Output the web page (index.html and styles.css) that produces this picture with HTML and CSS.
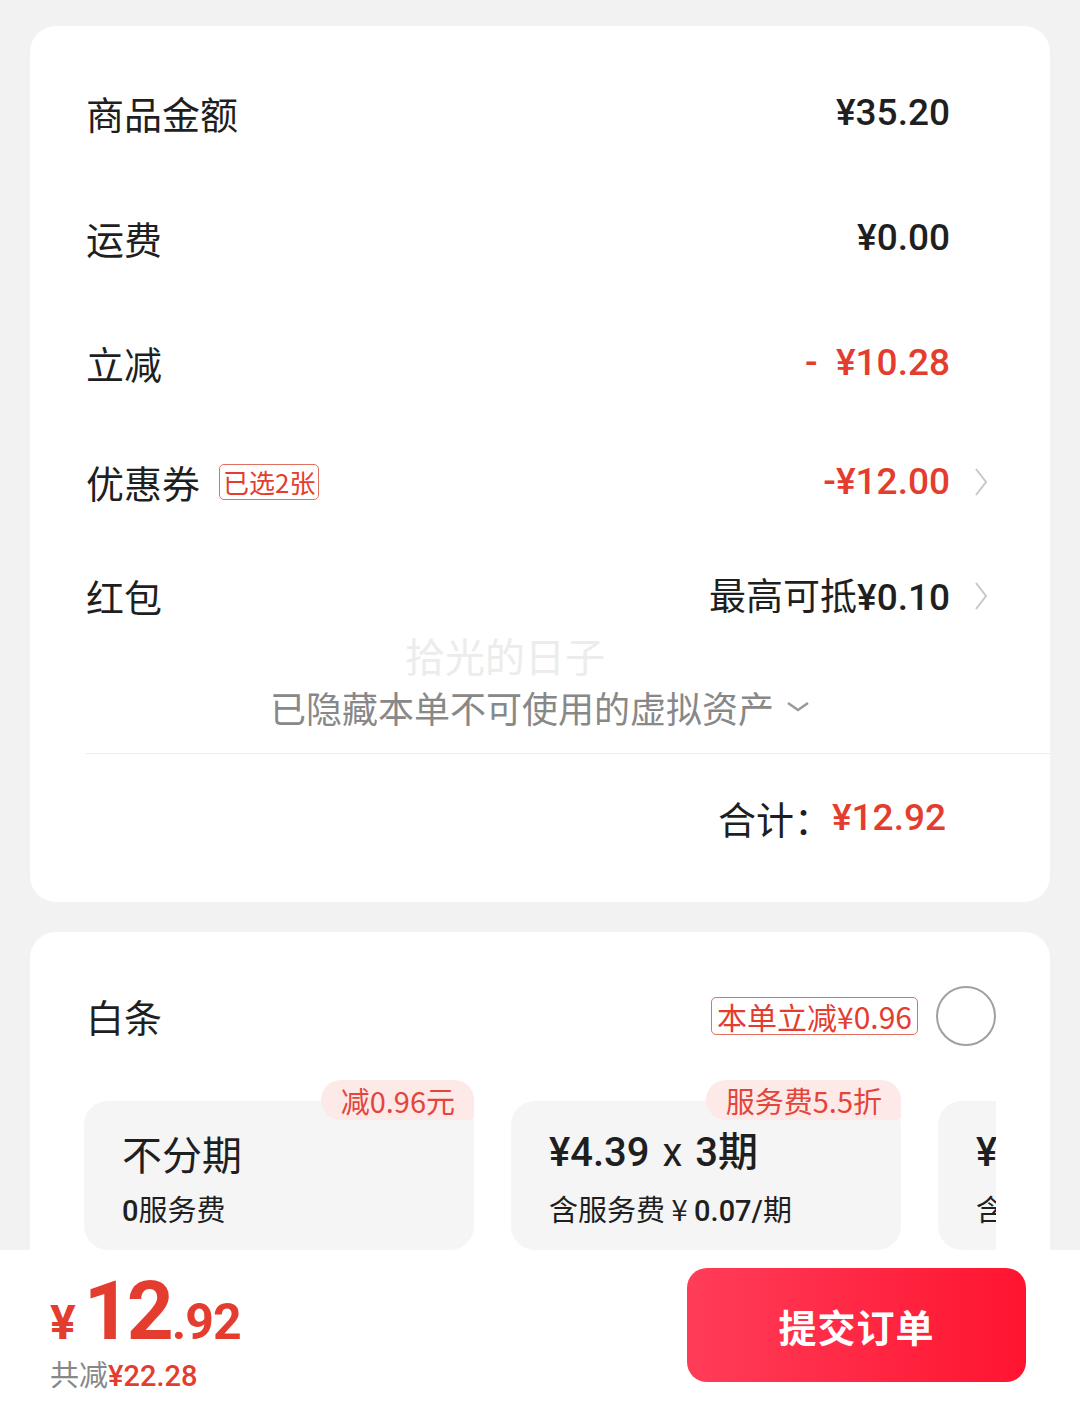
FILE: index.html
```html
<!DOCTYPE html>
<html lang="zh-CN">
<head>
    <meta charset="UTF-8">
    <meta name="viewport" content="width=device-width, initial-scale=1.0">
    <title>确认订单</title>
    <link rel="stylesheet" href="styles.css">
</head>
<body>
    <section class="card summary">
        <div class="row row-plain">
            <span class="label">商品金额</span>
            <span class="value num">¥35.20</span>
            <span class="arrow"></span>
        </div>
        <div class="row row-plain">
            <span class="label">运费</span>
            <span class="value num">¥0.00</span>
            <span class="arrow"></span>
        </div>
        <div class="row row-plain">
            <span class="label">立减</span>
            <span class="value num red">-&nbsp;&nbsp;¥10.28</span>
            <span class="arrow"></span>
        </div>
        <div class="row row-link">
            <span class="label">优惠券</span>
            <span class="tag tag-small">已选2张</span>
            <span class="value num red">-¥12.00</span>
            <span class="arrow">
                <svg width="14" height="30" viewBox="0 0 14 30"><polyline points="2,2 12,15 2,28" fill="none" stroke="#c8c8c8" stroke-width="2"/></svg>
            </span>
        </div>
        <div class="row row-link">
            <span class="label">红包</span>
            <span class="value">最高可抵<span class="num">¥0.10</span></span>
            <span class="arrow">
                <svg width="14" height="30" viewBox="0 0 14 30"><polyline points="2,2 12,15 2,28" fill="none" stroke="#c8c8c8" stroke-width="2"/></svg>
            </span>
        </div>
        <div class="hidden-assets">
            <span class="watermark">拾光的日子</span>
            <span>已隐藏本单不可使用的虚拟资产</span>
            <svg width="24" height="14" viewBox="0 0 24 14"><polyline points="2,3 12,10 22,3" fill="none" stroke="#999" stroke-width="2.5"/></svg>
        </div>
        <div class="total">
            <span class="total-label">合计：</span>
            <span class="num red">¥12.92</span>
        </div>
    </section>

    <section class="card pay">
        <div class="pay-head">
            <span class="label">白条</span>
            <span class="tag">本单立减¥0.96</span>
            <span class="radio"></span>
        </div>
        <div class="plans">
            <div class="plan">
                <span class="badge">减0.96元</span>
                <div class="plan-title">不分期</div>
                <div class="plan-sub"><span class="num">0</span>服务费</div>
            </div>
            <div class="plan">
                <span class="badge">服务费5.5折</span>
                <div class="plan-title num">¥4.39 <span class="times">x</span> 3期</div>
                <div class="plan-sub">含服务费 ¥ <span class="num">0.07/</span>期</div>
            </div>
            <div class="plan">
                <div class="plan-title num">¥1.48 <span class="times">x</span> 6期</div>
                <div class="plan-sub">含服务费 ¥ <span class="num">0.06/</span>期</div>
            </div>
        </div>
    </section>

    <footer class="bottom-bar">
        <div class="price">
            <div class="price-main">
                <span class="yen">¥</span><span class="int">12</span><span class="dec">.92</span>
            </div>
            <div class="saved">共减<span class="num red">¥22.28</span></div>
        </div>
        <button class="submit">提交订单</button>
    </footer>
</body>
</html>
```

FILE: styles.css
```css
body {
    margin: 0;
    padding: 26px 30px 0;
    background-color: #f2f2f2;
    font-family: "Noto Sans CJK SC", sans-serif;
    color: #1f1f1f;
    height: 1392px;
    overflow: hidden;
    box-sizing: border-box;
}

.num {
    font-family: Roboto, "Noto Sans CJK SC", sans-serif;
    font-weight: 500;
}

.red {
    color: #e43d2f;
}

.card {
    background-color: #fff;
    border-radius: 26px;
}

.summary {
    padding: 24px 0 22px 56px;
    position: relative;
}

.row {
    display: flex;
    align-items: center;
    padding-right: 62px;
}

.row-plain {
    height: 125px;
}

.row-link {
    height: 114px;
}

.label {
    font-size: 38px;
    line-height: 44px;
}

.value {
    margin-left: auto;
    font-size: 37px;
    line-height: 44px;
}

.arrow {
    width: 38px;
    display: flex;
    justify-content: flex-end;
}

.tag {
    font-size: 30px;
    line-height: 36px;
    color: #e43d2f;
    border: 1px solid #e27060;
    border-radius: 5px;
    padding: 0 5px;
}

.tag-small {
    font-size: 26px;
    line-height: 34px;
    margin-left: 19px;
    padding: 0 3px;
}

.hidden-assets {
    position: relative;
    display: flex;
    justify-content: center;
    align-items: center;
    gap: 12px;
    padding: 34px 56px 26px 0;
    font-size: 36px;
    line-height: 40px;
    color: #888;
    border-bottom: 1px solid #ececec;
}

.watermark {
    position: absolute;
    top: -18px;
    left: 319px;
    font-size: 40px;
    color: #ececec;
}

.total {
    height: 126px;
    display: flex;
    justify-content: flex-end;
    align-items: center;
    padding-right: 104px;
    font-size: 38px;
}

.total .num {
    font-size: 37px;
}

.pay {
    margin-top: 30px;
    padding: 54px 54px 40px 54px;
}

.pay-head {
    display: flex;
    align-items: center;
    height: 60px;
    padding-left: 2px;
}

.pay-head .tag {
    margin-left: auto;
    margin-right: 18px;
}

.radio {
    width: 56px;
    height: 56px;
    border: 2px solid #a0a0a0;
    border-radius: 50%;
}

.plans {
    display: flex;
    gap: 37px;
    margin-top: 31px;
    overflow: hidden;
    width: 912px;
}

.plan {
    position: relative;
    flex: 0 0 390px;
    height: 149px;
    margin-top: 24px;
    background-color: #f5f5f5;
    border-radius: 24px;
    padding: 26px 0 0 38px;
    box-sizing: border-box;
}

.badge {
    position: absolute;
    top: -21px;
    right: 0;
    background-color: #fde9e8;
    color: #e2463b;
    font-size: 29px;
    line-height: 40px;
    padding: 0 19px 0 20px;
    border-radius: 20px 20px 4px 20px;
}

.plan-title {
    font-size: 40px;
    line-height: 52px;
    word-spacing: 3px;
}

.times {
    font-weight: 400;
}

.plan-sub {
    font-size: 29px;
    line-height: 40px;
    margin-top: 9px;
}

.bottom-bar {
    position: fixed;
    left: 0;
    right: 0;
    bottom: 0;
    height: 168px;
    background-color: #fff;
    display: flex;
    align-items: flex-start;
    justify-content: space-between;
    padding: 18px 54px 0 50px;
    box-sizing: border-box;
}

.price {
    color: #e43d2f;
    font-family: Roboto, sans-serif;
    font-weight: 700;
    margin-top: 3px;
}

.price-main {
    display: flex;
    align-items: baseline;
    line-height: 80px;
}

.yen {
    font-size: 48px;
    margin-right: 8px;
}

.int {
    font-size: 82px;
    letter-spacing: -4px;
}

.dec {
    font-size: 50px;
    margin-left: 2px;
    letter-spacing: -1px;
}

.saved {
    font-family: "Noto Sans CJK SC", sans-serif;
    font-weight: 400;
    color: #888;
    font-size: 29px;
    line-height: 40px;
    margin-top: -10px;
}

.saved .num {
    font-weight: 500;
}

.submit {
    width: 339px;
    height: 114px;
    border: none;
    border-radius: 20px;
    background: linear-gradient(90deg, #ff3d59, #ff1430);
    color: #fff;
    font-family: "Noto Sans CJK SC", sans-serif;
    font-weight: 700;
    font-size: 38px;
    letter-spacing: 1px;
}
```
